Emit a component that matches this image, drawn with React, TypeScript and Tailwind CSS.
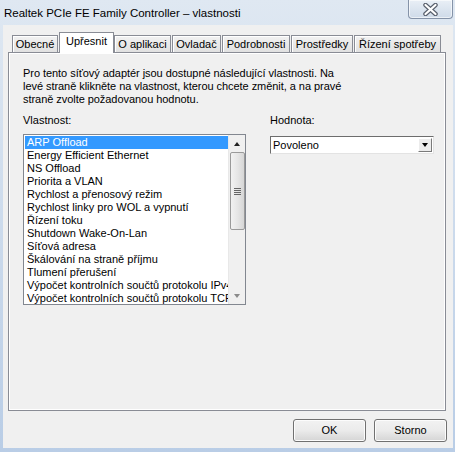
const tabs = [
  { label: "Obecné", width: "w-[46px]", margin: "ml-[4px]" },
  { label: "Upřesnit", width: "w-[55px]", margin: "ml-[1px]", active: true },
  { label: "O aplikaci", width: "w-[57px]", margin: "ml-0" },
  { label: "Ovladač", width: "w-[49px]", margin: "ml-[1px]" },
  { label: "Podrobnosti", width: "w-[68px]", margin: "ml-[1px]" },
  { label: "Prostředky", width: "w-[62px]", margin: "ml-[1px]" },
  { label: "Řízení spotřeby", width: "w-[87px]", margin: "ml-[1px]" },
];

const properties = [
  "ARP Offload",
  "Energy Efficient Ethernet",
  "NS Offload",
  "Priorita a VLAN",
  "Rychlost a přenosový režim",
  "Rychlost linky pro WOL a vypnutí",
  "Řízení toku",
  "Shutdown Wake-On-Lan",
  "Síťová adresa",
  "Škálování na straně příjmu",
  "Tlumení přerušení",
  "Výpočet kontrolních součtů protokolu IPv4",
  "Výpočet kontrolních součtů protokolu TCP (IPv4)",
];

const CloseGlyph = () => (
  <svg width="17" height="13" viewBox="0 0 17 13">
    <path
      d="M3.5 2 L13.5 11 M13.5 2 L3.5 11"
      stroke="#59606d"
      strokeWidth="4.5"
      strokeLinecap="round"
    />
    <path
      d="M3.5 2 L13.5 11 M13.5 2 L3.5 11"
      stroke="#ffffff"
      strokeWidth="2.2"
      strokeLinecap="round"
    />
  </svg>
);

const ScrollBar = () => (
  <div className="flex w-[17px] flex-col border-l border-[#e8e8e8] bg-[#f0f0f0]">
    <div className="flex h-[17px] items-center justify-center">
      <div className="h-0 w-0 border-x-[3px] border-b-[4px] border-x-transparent border-b-[#222]" />
    </div>
    <div className="mx-auto flex h-[78px] w-[15px] flex-col items-center justify-center gap-[1px] rounded-[2px] border border-[#9a9a9a] bg-gradient-to-r from-[#f2f2f2] via-[#e6e6e6] to-[#d6d6d6]">
      <div className="h-px w-[7px] bg-[#666]" />
      <div className="h-px w-[7px] bg-[#666]" />
      <div className="h-px w-[7px] bg-[#666]" />
      <div className="h-px w-[7px] bg-[#666]" />
    </div>
    <div className="flex-1" />
    <div className="flex h-[17px] items-center justify-center">
      <div className="h-0 w-0 border-x-[3px] border-t-[4px] border-x-transparent border-t-[#8a8a8a]" />
    </div>
  </div>
);

const App = () => {
  return (
    <div className="flex h-[452px] w-[455px] flex-col overflow-hidden bg-gradient-to-b from-[#dfe8f2] to-[#b9cde6] font-['Liberation_Sans',Arial,sans-serif] text-black">
      {/* title bar */}
      <div className="relative flex h-[25px] items-start">
        <span className="ml-[4px] mt-[6px] text-[11.5px] leading-[14px] text-black">
          Realtek PCIe FE Family Controller – vlastnosti
        </span>
        <div className="absolute right-[2px] top-0 flex h-[19px] w-[45px] items-center justify-center rounded-b-[4px] border border-t-0 border-[#8593a8] bg-gradient-to-b from-[#e9eff6] to-[#cfdbe9] shadow-[inset_0_0_0_1px_rgba(255,255,255,0.6)]">
          <CloseGlyph />
        </div>
      </div>

      {/* client area */}
      <div className="mb-[4px] ml-[3px] mr-[2px] flex flex-1 flex-col bg-[#f0f0f0] pl-[5px] pt-[7px]">
        {/* tabs */}
        <div className="relative z-10 flex h-[20px] items-end">
          {tabs.map((tab) =>
            tab.active ? (
              <div
                key={tab.label}
                className={`${tab.width} ${tab.margin} -mb-px flex h-[21px] items-start justify-center border border-b-0 border-[#898c95] bg-white pt-[2px] text-[11px] leading-[13px]`}
              >
                {tab.label}
              </div>
            ) : (
              <div
                key={tab.label}
                className={`${tab.width} ${tab.margin} flex h-[17px] items-center justify-center border border-b-0 border-[#898c95] bg-gradient-to-b from-[#f2f2f2] to-[#e1e1e1] text-[11px] leading-[13px] shadow-[inset_1px_1px_0_#fff]`}
              >
                {tab.label}
              </div>
            ),
          )}
        </div>

        {/* panel */}
        <div className="flex h-[359px] w-[438px] flex-col border border-[#898c95] bg-[#f0f0f0] pl-[14px] pt-[14px] text-[11px] leading-[13px] shadow-[inset_1px_1px_0_#fff,inset_-1px_-1px_0_#fff]">
          <p className="tracking-[-0.05px]">
            Pro tento síťový adaptér jsou dostupné následující vlastnosti. Na
            <br />
            levé straně klikněte na vlastnost, kterou chcete změnit, a na pravé
            <br />
            straně zvolte požadovanou hodnotu.
          </p>

          <div className="mt-[8px] flex">
            <div className="flex w-[223px] flex-col">
              <span className="mb-[7px]">Vlastnost:</span>
              <div className="flex h-[171px] border border-[#828790] bg-white">
                <div className="flex min-w-0 flex-1 flex-col overflow-hidden py-px pl-px">
                  {properties.map((item, index) => (
                    <div
                      key={item}
                      className={`h-[13px] whitespace-nowrap pl-[2px] leading-[13px] ${
                        index === 0 ? "bg-[#3399ff] text-white" : ""
                      }`}
                    >
                      {item}
                    </div>
                  ))}
                </div>
                <ScrollBar />
              </div>
            </div>

            <div className="ml-[24px] flex flex-col">
              <span className="mb-[9px]">Hodnota:</span>
              <div className="flex h-[18px] w-[164px] items-center border border-b-[#e3e3e3] border-l-[#6d6d6d] border-r-[#e3e3e3] border-t-[#6d6d6d] bg-white">
                <span className="flex-1 pl-[2px]">Povoleno</span>
                <div className="mr-px flex h-[14px] w-[14px] items-center justify-center border border-b-[#7a7a7a] border-l-[#fff] border-r-[#7a7a7a] border-t-[#fff] bg-[#ececec]">
                  <div className="h-0 w-0 border-x-[3px] border-t-[4px] border-x-transparent border-t-black" />
                </div>
              </div>
            </div>
          </div>
        </div>

        {/* buttons */}
        <div className="mt-[8px] flex justify-end gap-[8px] pr-[6px]">
          <button className="h-[23px] w-[73px] rounded-[3px] border border-[#707070] bg-gradient-to-b from-[#f2f2f2] via-[#ebebeb] to-[#d5d5d5] text-[11px] shadow-[inset_0_0_0_1px_#fcfcfc]">
            OK
          </button>
          <button className="h-[23px] w-[73px] rounded-[3px] border border-[#707070] bg-gradient-to-b from-[#f2f2f2] via-[#ebebeb] to-[#d5d5d5] text-[11px] shadow-[inset_0_0_0_1px_#fcfcfc]">
            Storno
          </button>
        </div>
      </div>
    </div>
  );
};

export default App;
